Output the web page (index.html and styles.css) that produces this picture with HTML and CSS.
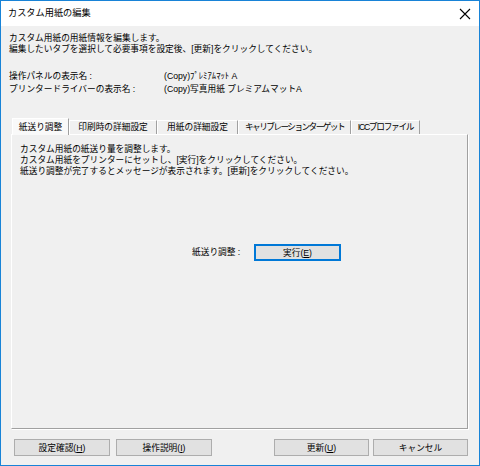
FILE: index.html
```html
<!DOCTYPE html>
<html lang="ja">
<head>
<meta charset="utf-8">
<link rel="stylesheet" href="styles.css">
</head>
<body>
<div class="window">
  <div class="titlebar">
    <span class="title">カスタム用紙の編集</span>
    <svg class="close" width="12" height="12" viewBox="0 0 12 12"><path d="M1 1L11 11M11 1L1 11" stroke="#000" stroke-width="1.1" fill="none"/></svg>
  </div>
  <div class="body">
    <div class="intro">
      <p>カスタム用紙の用紙情報を編集します。</p>
      <p>編集したいタブを選択して必要事項を設定後、[更新]をクリックしてください。</p>
    </div>
    <div class="names">
      <span>操作パネルの表示名 :</span><span>(Copy)ﾌﾟﾚﾐｱﾑﾏｯﾄ A</span>
      <span>プリンタードライバーの表示名 :</span><span>(Copy)写真用紙 プレミアムマットA</span>
    </div>
    <div class="tabs">
      <div class="tab active tab-1">紙送り調整</div>
      <div class="tab tab-2">印刷時の詳細設定</div>
      <div class="tab tab-3">用紙の詳細設定</div>
      <div class="tab tab-4">キャリブレーションターゲット</div>
      <div class="tab tab-5">ICCプロファイル</div>
    </div>
    <div class="panel">
      <div class="panel-text">
        <p>カスタム用紙の紙送り量を調整します。</p>
        <p>カスタム用紙をプリンターにセットし、[実行]をクリックしてください。</p>
        <p>紙送り調整が完了するとメッセージが表示されます。[更新]をクリックしてください。</p>
      </div>
      <div class="action">
        <span class="action-label">紙送り調整 :</span>
        <button class="btn btn-default">実行(<u>E</u>)</button>
      </div>
    </div>
    <div class="footer">
      <div class="group">
        <button class="btn btn-foot">設定確認(<u>H</u>)</button>
        <button class="btn btn-foot">操作説明(<u>I</u>)</button>
      </div>
      <div class="group group-right">
        <button class="btn btn-foot">更新(<u>U</u>)</button>
        <button class="btn btn-foot">キャンセル</button>
      </div>
    </div>
  </div>
</div>
</body>
</html>
```

FILE: styles.css
```css
* { box-sizing: border-box; }
html, body { margin: 0; padding: 0; }
body {
  width: 480px;
  height: 466px;
  font-family: "Liberation Sans", "Noto Sans CJK JP", sans-serif;
  font-size: 8.7px;
  line-height: 11px;
  color: #000;
  background: #fff;
}
p { margin: 0; }
.window {
  width: 480px;
  height: 466px;
  border: 1px solid #1883d7;
  display: flex;
  flex-direction: column;
  background: #f0f0f0;
}
.titlebar {
  height: 25px;
  background: #fff;
  display: flex;
  align-items: center;
  justify-content: space-between;
  padding: 0 8px 0 7px;
  flex: none;
}
.title { font-size: 9.2px; }
.close { display: block; }
.body {
  flex: 1;
  display: flex;
  flex-direction: column;
  padding: 7px 11px 0 8px;
}
.intro p { white-space: nowrap; }
.names {
  margin-top: 16px;
  display: grid;
  grid-template-columns: 155px auto;
  row-gap: 2px;
  white-space: nowrap;
}
.tabs {
  margin-top: 22px;
  display: flex;
  align-items: flex-end;
  padding-left: 3px;
  height: 17px;
  position: relative;
  z-index: 1;
}
.tab {
  height: 14px;
  line-height: 13px;
  text-align: center;
  border: 1px solid;
  border-bottom: none;
  border-color: #fff #a0a0a0 transparent #fff;
  background: #f0f0f0;
  white-space: nowrap;
  overflow: hidden;
}
.tab.active {
  height: 17px;
  line-height: 16px;
  background: #f9f9f9;
  position: relative;
  z-index: 2;
  margin-bottom: -1px;
}
.tab-1 { width: 57px; }
.tab-2 { width: 88px; }
.tab-3 { width: 81px; }
.tab-4 { width: 113px; letter-spacing: -1.6px; }
.tab-5 { width: 69px; letter-spacing: -1.3px; }
.panel {
  height: 295px;
  border: 1px solid;
  border-color: #fff #a0a0a0 #a0a0a0 #fff;
  box-shadow: 1px 1px 0 #fff;
  display: flex;
  flex-direction: column;
  padding: 9px 8px 0 8px;
  margin-left: 2px;
}
.panel-text p { white-space: nowrap; }
.action {
  margin-top: 67px;
  display: flex;
  align-items: center;
  padding-left: 172px;
}
.action-label { width: 62px; }
.btn {
  font-family: inherit;
  font-size: 8.7px;
  line-height: 11px;
  color: #000;
  background: #e1e1e1;
  border: 1px solid #adadad;
  padding: 1px 0 0;
  height: 17px;
  margin: 0;
}
.btn u { text-decoration: underline; }
.btn-default {
  width: 87px;
  border: 2px solid #0078d7;
}
.footer {
  margin-top: 10px;
  display: flex;
  justify-content: space-between;
  padding-left: 5px;
}
.group { display: flex; gap: 6px; }
.group-right { gap: 4px; }
.btn-foot { width: 96px; }
.group-right .btn-foot { width: 95px; }
```
